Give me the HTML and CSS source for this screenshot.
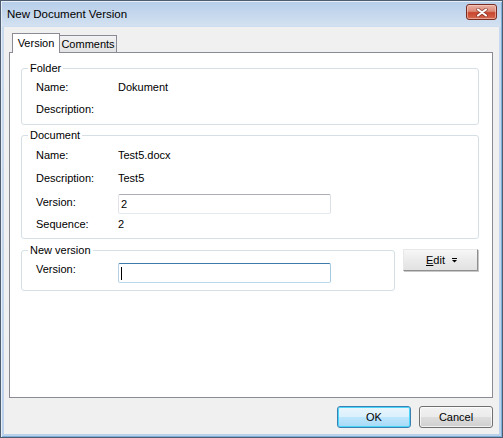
FILE: index.html
```html
<!DOCTYPE html>
<html>
<head>
<meta charset="utf-8">
<link rel="stylesheet" href="styles.css">
</head>
<body>
<div class="window">
  <div class="titlebar">
    <span class="title">New Document Version</span>
    <div class="close">
      <svg width="12" height="9" viewBox="0 0 12 9">
        <path d="M2 1.5 L10 7.5 M10 1.5 L2 7.5" stroke="#6b241a" stroke-width="3.6" stroke-linecap="round" opacity="0.6"/>
        <path d="M2 1.5 L10 7.5 M10 1.5 L2 7.5" stroke="#ffffff" stroke-width="2.1" stroke-linecap="round"/>
      </svg>
    </div>
  </div>
  <div class="client">
    <div class="tabs">
      <div class="tab active">Version</div>
      <div class="tab">Comments</div>
    </div>
    <div class="panel">
      <fieldset class="group folder">
        <legend>Folder</legend>
        <div class="row r22"><span class="label">Name:</span><span class="value">Dokument</span></div>
        <div class="row r22"><span class="label">Description:</span><span class="value"></span></div>
      </fieldset>
      <fieldset class="group document">
        <legend>Document</legend>
        <div class="row r22"><span class="label">Name:</span><span class="value">Test5.docx</span></div>
        <div class="row r24"><span class="label">Description:</span><span class="value">Test5</span></div>
        <div class="row r24"><span class="label">Version:</span><div class="field">2</div></div>
        <div class="row r21"><span class="label">Sequence:</span><span class="value">2</span></div>
      </fieldset>
      <div class="newrow">
        <fieldset class="group newversion">
          <legend>New version</legend>
          <div class="row r24"><span class="label l22">Version:</span><div class="field focus"><span class="caret"></span></div></div>
        </fieldset>
        <div class="editbtn"><span><u>E</u>dit</span>
          <svg width="5" height="5" viewBox="0 0 5 5"><rect x="0" y="0" width="5" height="1" fill="#000"/><polygon points="0,2 5,2 2.5,4.6" fill="#000"/></svg>
        </div>
      </div>
    </div>
    <div class="footer">
      <div class="btn default">OK</div>
      <div class="btn">Cancel</div>
    </div>
  </div>
</div>
</body>
</html>
```

FILE: styles.css
```css
* { box-sizing: border-box; }
html, body { margin: 0; padding: 0; }
body {
  width: 503px;
  height: 438px;
  overflow: hidden;
  font-family: "Liberation Sans", Arial, sans-serif;
  font-size: 11px;
  color: #000;
  background: #fff;
}
.window {
  width: 503px;
  height: 438px;
  border: 1px solid #4e5d70;
  background: linear-gradient(#b6cde9 0px, #d3e1f1 25px, #c9daee 26px, #bcd2eb 100%);
  padding: 0 3px 3px 3px;
  display: flex;
  flex-direction: column;
  box-shadow: inset 1px 1px 0 #e6eef8, inset -1px -1px 0 #7fb0dc;
}
.titlebar {
  height: 26px;
  display: flex;
  align-items: center;
  justify-content: space-between;
  padding-left: 3px;
  padding-right: 2px;
}
.title {
  font-size: 11.5px;
  color: #000;
}
.close {
  width: 31px;
  height: 16px;
  margin-top: -4px;
  border: 1px solid #7a2c20;
  border-radius: 3px;
  background: linear-gradient(#eab1a4 0%, #dc8a78 45%, #c8442c 55%, #d66a50 100%);
  box-shadow: inset 0 0 0 1px rgba(255, 220, 210, 0.5);
  display: flex;
  align-items: center;
  justify-content: center;
}
.client {
  flex: 1;
  background: #f0f0f0;
  display: flex;
  flex-direction: column;
  padding: 6px 6px 6px 5px;
}
.tabs {
  height: 19px;
  display: flex;
  align-items: flex-end;
  padding-left: 3px;
  position: relative;
  z-index: 1;
}
.tab {
  height: 17px;
  width: 58px;
  margin-left: -1px;
  border: 1px solid #898c95;
  border-bottom: 0;
  background: linear-gradient(#f2f2f2, #e3e3e3);
  text-align: center;
  line-height: 16px;
}
.tab.active {
  height: 20px;
  width: 48px;
  margin-left: 0;
  margin-bottom: -1px;
  background: #fff;
  line-height: 18px;
  position: relative;
  z-index: 2;
}
.panel {
  height: 346px;
  border: 1px solid #898c95;
  background: #fff;
  padding: 9px 13px 0 11px;
}
.group {
  margin: 0;
  padding: 0 0 4px 14px;
  border: 1px solid #d5dfe5;
  border-radius: 3px;
  min-width: 0;
}
.group legend {
  margin-left: -8px;
  padding: 0 2px;
  line-height: 13px;
  font-size: 11px;
}
.folder { padding-top: 1px; padding-bottom: 4px; }
.document { margin-top: 4px; padding-top: 2px; padding-bottom: 3px; }
.row {
  display: flex;
  align-items: flex-start;
}
.r21 { height: 21px; }
.r22 { height: 22px; }
.r24 { height: 24px; }
.label {
  width: 82px;
  flex: none;
  line-height: inherit;
}
.r21 .label, .r21 .value { line-height: 21px; }
.r22 .label, .r22 .value { line-height: 22px; }
.r24 .label, .r24 .value { line-height: 24px; }
.r24 .label.l22 { line-height: 22px; }
.field {
  width: 213px;
  height: 20px;
  margin-top: 4px;
  border: 1px solid;
  border-color: #abadb3 #dbdfe6 #e3e9ef #e2e3ea;
  border-radius: 2px;
  padding: 0 2px;
  line-height: 18px;
  background: #fff;
  display: flex;
  align-items: center;
}
.field.focus {
  margin-top: 5px;
  border-color: #3d7bad #a4c9e3 #b7d9ed #b5cfe7;
}
.caret {
  width: 1px;
  height: 13px;
  background: #000;
}
.newrow {
  display: flex;
  align-items: flex-start;
  margin-top: 5px;
}
.newversion {
  width: 374px;
  flex: none;
  padding-top: 1px;
  padding-bottom: 8px;
}
.editbtn {
  width: 75px;
  height: 22px;
  margin-left: 8px;
  margin-top: 5px;
  border: 1px solid;
  border-color: #e8e8e8 #8f8f8f #8f8f8f #e8e8e8;
  box-shadow: 1px 1px 0 #c8c8c8;
  background: linear-gradient(#f7f7f7, #ebebeb 50%, #e2e2e2);
  display: flex;
  align-items: center;
  justify-content: center;
  gap: 7px;
  padding-left: 2px;
}
.editbtn svg { margin-top: 1px; }
.footer {
  display: flex;
  justify-content: flex-end;
  gap: 8px;
  margin-top: 8px;
}
.btn {
  width: 74px;
  height: 22px;
  border: 1px solid #707070;
  border-radius: 3px;
  background: linear-gradient(#f2f2f2 0%, #ebebeb 50%, #dddddd 51%, #cfcfcf 100%);
  box-shadow: inset 0 0 0 1px rgba(255, 255, 255, 0.7);
  display: flex;
  align-items: center;
  justify-content: center;
}
.btn.default {
  border-color: #3c7fb1;
  background: linear-gradient(#eaf6fd 0%, #d9f0fc 50%, #bee6fd 51%, #a7d9f5 100%);
  box-shadow: inset 0 0 0 1px #48d7fb;
}
```
